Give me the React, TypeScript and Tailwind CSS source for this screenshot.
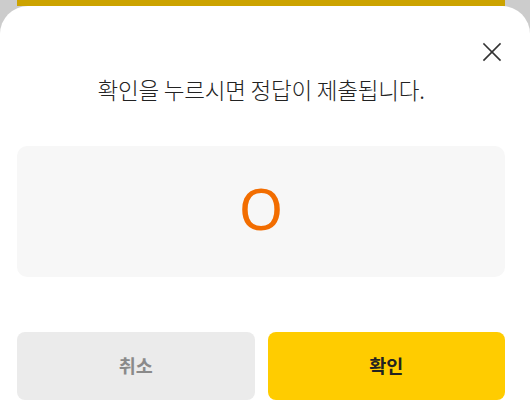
const FONT = "font-['Noto_Sans_CJK_KR','Noto_Sans',sans-serif]"

const CloseIcon = () => (
  <svg width="20" height="20" viewBox="0 0 20 20" fill="none" stroke="#333333" strokeWidth="1.6" strokeLinecap="square">
    <line x1="2" y1="2" x2="18" y2="18" />
    <line x1="18" y1="2" x2="2" y2="18" />
  </svg>
)

export default function App() {
  return (
    <div className={`w-[530px] h-[405px] bg-[#cccccc] overflow-hidden flex flex-col ${FONT}`}>
      {/* dimmed page button behind the sheet */}
      <div className="ml-[17px] mr-[25px] h-[6px] shrink-0 bg-[#cca300]" />

      <div className="flex-1 bg-white rounded-t-[28px] pl-[17px] pr-[25px] flex flex-col">
        <div className="flex justify-end pt-[36px] pr-[3px]">
          <button className="w-[20px] h-[20px]">
            <CloseIcon />
          </button>
        </div>

        <p className="mt-[12px] text-center text-[22.5px] leading-[30px] font-light text-[#222222] tracking-[-0.2px]">
          확인을 누르시면 정답이 제출됩니다.
        </p>

        <div className="mt-[42px] h-[131px] rounded-[10px] bg-[#f7f7f7] flex items-center justify-center">
          <span className="font-['Noto_Sans',sans-serif] text-[57px] leading-none text-[#f26d00] -mt-[6px]">O</span>
        </div>

        <div className="mt-[55px] grid grid-cols-2 gap-[13px]">
          <button className="h-[68px] rounded-[8px] bg-[#ebebeb] text-[18.5px] font-bold text-[#8a8a8a]">
            취소
          </button>
          <button className="h-[68px] rounded-[8px] bg-[#ffcc00] text-[18.5px] font-bold text-[#222222]">
            확인
          </button>
        </div>
      </div>
    </div>
  )
}
